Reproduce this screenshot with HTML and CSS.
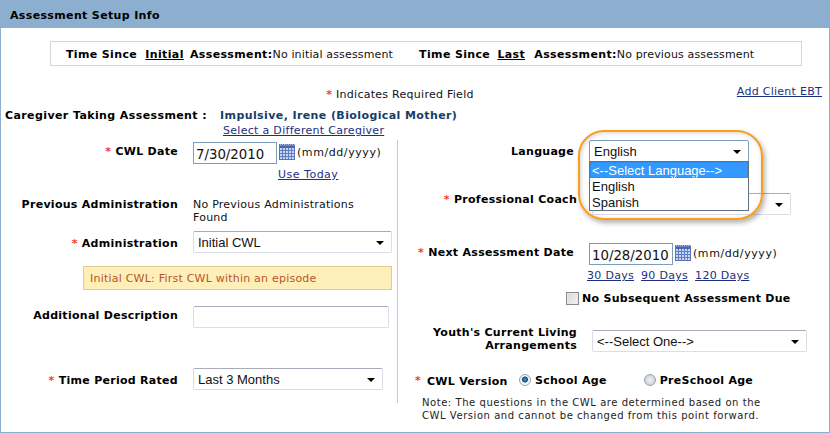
FILE: index.html
```html
<!DOCTYPE html>
<html lang="en">
<head>
<meta charset="utf-8">
<title>Assessment Setup Info</title>
<link rel="stylesheet" href="styles.css">
</head>
<body>
<main class="panel">
  <header class="panel-head">Assessment Setup Info</header>
  <div class="panel-body">
    <section class="since">
      <span class="since-item"><b>Time Since <u>Initial</u> Assessment:</b>No initial assessment</span>
      <span class="since-item since-last"><b>Time Since <u>Last</u> Assessment:</b>No previous assessment</span>
    </section>
    <div class="req-line">
      <p class="req-note"><span class="star">*</span> Indicates Required Field</p>
      <a class="add-ebt" href="#">Add Client EBT</a>
    </div>
    <p class="caregiver"><b>Caregiver Taking Assessment :</b><b class="caregiver-name">Impulsive, Irene (Biological Mother)</b></p>
    <p class="caregiver-link"><a href="#">Select a Different Caregiver</a></p>
    <div class="columns">
      <div class="col col-left">
        <div class="row row-cwl">
          <label class="lbl"><span class="star">*</span> CWL Date</label>
          <div class="field">
            <div class="date-line">
              <div class="input date">7/30/2010</div>
              <svg class="cal" viewBox="0 0 16 16"><use href="#cal"/></svg>
              <span class="hint">(mm/dd/yyyy)</span>
            </div>
            <a class="today" href="#">Use Today</a>
          </div>
        </div>
        <div class="row row-prev">
          <label class="lbl">Previous Administration</label>
          <div class="field prev-text">No Previous Administrations Found</div>
        </div>
        <div class="row row-admin">
          <label class="lbl"><span class="star">*</span> Administration</label>
          <div class="select admin-select">Initial CWL<i class="arrow"></i></div>
        </div>
        <div class="notice">Initial CWL: First CWL within an episode</div>
        <div class="row row-desc">
          <label class="lbl">Additional Description</label>
          <div class="input desc-input"></div>
        </div>
        <div class="row row-period">
          <label class="lbl"><span class="star">*</span> Time Period Rated</label>
          <div class="select period-select">Last 3 Months<i class="arrow"></i></div>
        </div>
      </div>
      <div class="col col-right">
        <div class="row row-lang">
          <label class="lbl">Language</label>
          <div class="select lang-select">English<i class="arrow"></i></div>
        </div>
        <div class="row row-coach">
          <label class="lbl"><span class="star">*</span> Professional Coach</label>
          <div class="select coach-select"><i class="arrow"></i></div>
        </div>
        <div class="row row-next">
          <label class="lbl"><span class="star">*</span> Next Assessment Date</label>
          <div class="field">
            <div class="date-line">
              <div class="input date">10/28/2010</div>
              <svg class="cal" viewBox="0 0 16 16"><use href="#cal"/></svg>
              <span class="hint">(mm/dd/yyyy)</span>
            </div>
            <div class="days"><a href="#">30 Days</a><a href="#">90 Days</a><a href="#">120 Days</a></div>
          </div>
        </div>
        <div class="no-subsequent"><i class="check"></i><b>No Subsequent Assessment Due</b></div>
        <div class="row row-youth">
          <label class="lbl">Youth's Current Living Arrangements</label>
          <div class="select youth-select">&lt;--Select One--&gt;<i class="arrow"></i></div>
        </div>
        <div class="version">
          <span class="star">*</span><b class="version-lbl">CWL Version</b>
          <i class="radio radio-on"></i><b class="radio-text">School Age</b>
          <i class="radio radio-second"></i><b class="radio-text">PreSchool Age</b>
        </div>
        <p class="version-note">Note: The questions in the CWL are determined based on the CWL Version and cannot be changed from this point forward.</p>
      </div>
    </div>
  </div>

  <div class="ring"></div>
  <ul class="dropdown">
    <li class="opt-active">&lt;--Select Language--&gt;</li>
    <li>English</li>
    <li>Spanish</li>
  </ul>
</main>
<svg class="defs" width="0" height="0" aria-hidden="true">
  <symbol id="cal" viewBox="0 0 16 16">
    <rect x="0.5" y="1" width="15" height="14.5" fill="#c9d6f2" stroke="#5b74b8"/>
    <path d="M0 0.5h16" stroke="#777" stroke-dasharray="1 1"/>
    <rect x="1" y="1.5" width="14" height="2.5" fill="#4a66ae"/>
    <path d="M3.5 4v11M6.5 4v11M9.5 4v11M12.5 4v11M1 6.5h14M1 9.5h14M1 12.5h14" stroke="#5f7cc4" stroke-width="1"/>
  </symbol>
</svg>
</body>
</html>
```
FILE: styles.css
```css
* { box-sizing: border-box; }
html, body { margin: 0; padding: 0; background: #fff; }
body { width: 830px; height: 433px; overflow: hidden; font: 11px/13px "DejaVu Sans", Verdana, sans-serif; letter-spacing: .3px; color: #111; }
p { margin: 0; }
a { color: #1c2f80; text-decoration: underline; }
b { font-weight: bold; color: #000; letter-spacing: .28px; }

.panel { position: relative; width: 830px; height: 433px; border: 1px solid #8cafd0; border-top: 0; }
.panel-head { height: 28px; margin: 0 -1px; padding: 9px 0 0 10px; background: #8cafd0; font-weight: bold; letter-spacing: .35px; color: #000; }
.panel-body { display: flow-root; }

.since { display: flex; margin: 13px 0 0 49px; width: 752px; height: 25px; padding-top: 6px; border: 1px solid #d5d5d5; letter-spacing: .15px; }
.since b { letter-spacing: .36px; }
.since-item { margin-left: 15px; white-space: nowrap; }
.since-last { margin-left: 26px; }
.since u { margin: 0 2px 0 4px; }
.since-last u { margin: 0 5px 0 3px; }

.req-line { position: relative; height: 20px; margin-top: 22px; text-align: center; letter-spacing: .27px; }
.req-note { padding-right: 30px; }
.add-ebt { position: absolute; right: 7px; top: -3px; letter-spacing: .27px; }
.star { color: #f4402a; font-weight: bold; }

.caregiver { margin: 1px 0 0 4px; }
.caregiver b { letter-spacing: .4px; }
.caregiver-name { margin-left: 13px; }
.caregiver .caregiver-name { color: #153d69; }
.caregiver-link { margin: 2px 0 0 222px; height: 13px; }

.columns { display: flex; margin-top: 3px; }
.col-left { width: 397px; height: 263px; border-right: 1px solid #c8c8c8; }
.col-right { width: 431px; }

.row { display: flex; }
.lbl { flex: none; font-weight: bold; letter-spacing: .28px; color: #000; text-align: right; }
.col-left .lbl { width: 177px; margin-right: 15px; }
.col-right .lbl { width: 176px; margin-right: 15px; }

.input, .select { position: relative; flex: none; height: 22px; border: 1px solid #d8dde8; border-top-color: #a8acb8; border-radius: 2px; background: #fff; }
.select { padding: 2px 0 0 4px; font: 13px/17px "Liberation Sans", Arial, sans-serif; letter-spacing: 0; color: #111; }
.arrow { position: absolute; right: 7px; top: 9px; width: 0; height: 0; border: 4px solid transparent; border-top: 4px solid #000; border-bottom: 0; }

.date-line { display: flex; align-items: flex-start; }
.input.date { width: 84px; padding: 3px 0 0 2px; border: 1px solid #7f9db9; border-radius: 0; font: 13.3px/18px "DejaVu Sans", Verdana, sans-serif; letter-spacing: 0; color: #111; }
.cal { flex: none; width: 16px; height: 16px; margin: 2px 2px 0 2px; }
.hint { margin-top: 4px; white-space: nowrap; letter-spacing: .58px; }
.today { display: block; margin: 4px 0 0 85px; letter-spacing: .5px; }
.defs { position: absolute; }

.row-cwl { height: 59px; padding-top: 2px; }
.row-cwl .lbl { padding-top: 3px; }
.row-prev { height: 32px; }
.row-prev .lbl { margin-top: -1px; }
.prev-text { width: 175px; letter-spacing: .23px; margin-top: -1px; }
.row-admin { height: 35px; }
.row-admin .lbl { padding-top: 6px; }
.admin-select { width: 199px; }
.notice { width: 309px; height: 24px; margin-left: 82px; padding: 5px 0 0 6px; background: #feeeb8; border: 1px solid #e3cc8c; color: #b5562c; letter-spacing: .22px; }
.row-desc { height: 62px; margin-top: 16px; }
.row-desc .lbl { padding-top: 3px; }
.desc-input { width: 196px; }
.row-period .lbl { padding-top: 6px; }
.period-select { width: 190px; }

.row-lang { height: 53px; }
.row-lang .lbl { padding-top: 5px; }
.lang-select { width: 160px; height: 24px; border: 1px solid #7f9db9; z-index: 2; }
.row-coach { height: 50px; }
.col-right .row-coach .lbl { width: 179px; }
.coach-select { width: 199px; }
.row-next { height: 48px; }
.row-next .lbl { padding-top: 3px; }
.days { display: flex; gap: 7px; margin: 4px 0 0 -2px; }
.no-subsequent { display: flex; align-items: center; height: 14px; margin-left: 168px; }
.check { width: 13px; height: 13px; margin-right: 3px; border: 1px solid #8a8a8a; background: linear-gradient(135deg, #d8d8d8, #f4f4f4); box-shadow: inset 0 0 0 1px #e8e8e8; }
.row-youth { height: 42px; margin-top: 25px; }
.col-right .row-youth .lbl { width: 179px; margin-top: -4px; }
.youth-select { width: 215px; }

.version { display: flex; align-items: center; height: 16px; padding-left: 15px; }
.version .star { width: 14px; padding-left: 2px; }
.version-lbl { width: 92px; padding-top: 2px; }
.radio { flex: none; width: 12px; height: 12px; border: 1px solid #98a2ae; border-radius: 50%; background: radial-gradient(circle at 50% 50%, #f0f2f4, #c4c8ce); }
.radio-on { background: radial-gradient(circle at 50% 45%, #4f9ad0 0, #14507f 2.6px, #e8edf2 3.4px, #fff 5px); }
.radio-second { margin-left: 37px; }
.radio-text { margin-left: 4px; }
.version-note { width: 360px; margin: 8px 0 0 24px; font-size: 10px; letter-spacing: .55px; color: #222; }

.ring { position: absolute; left: 577px; top: 130px; width: 185px; height: 90px; border: 2px solid #f99d1c; border-radius: 26px; box-shadow: 2px 3px 5px rgba(0,0,0,.3), inset 1px 1px 4px rgba(0,0,0,.18); z-index: 3; pointer-events: none; }
.dropdown { position: absolute; left: 588px; top: 161px; width: 160px; height: 50px; margin: 0; padding: 0; list-style: none; background: #fff; border: 1px solid #647082; font: 13px/18px "Liberation Sans", Arial, sans-serif; letter-spacing: 0; color: #111; z-index: 4; }
.dropdown li { height: 16px; padding-left: 2px; }
.dropdown .opt-active { background: #3399ff; color: #fff; outline: 1px dotted #b5651d; outline-offset: -1px; }
```
